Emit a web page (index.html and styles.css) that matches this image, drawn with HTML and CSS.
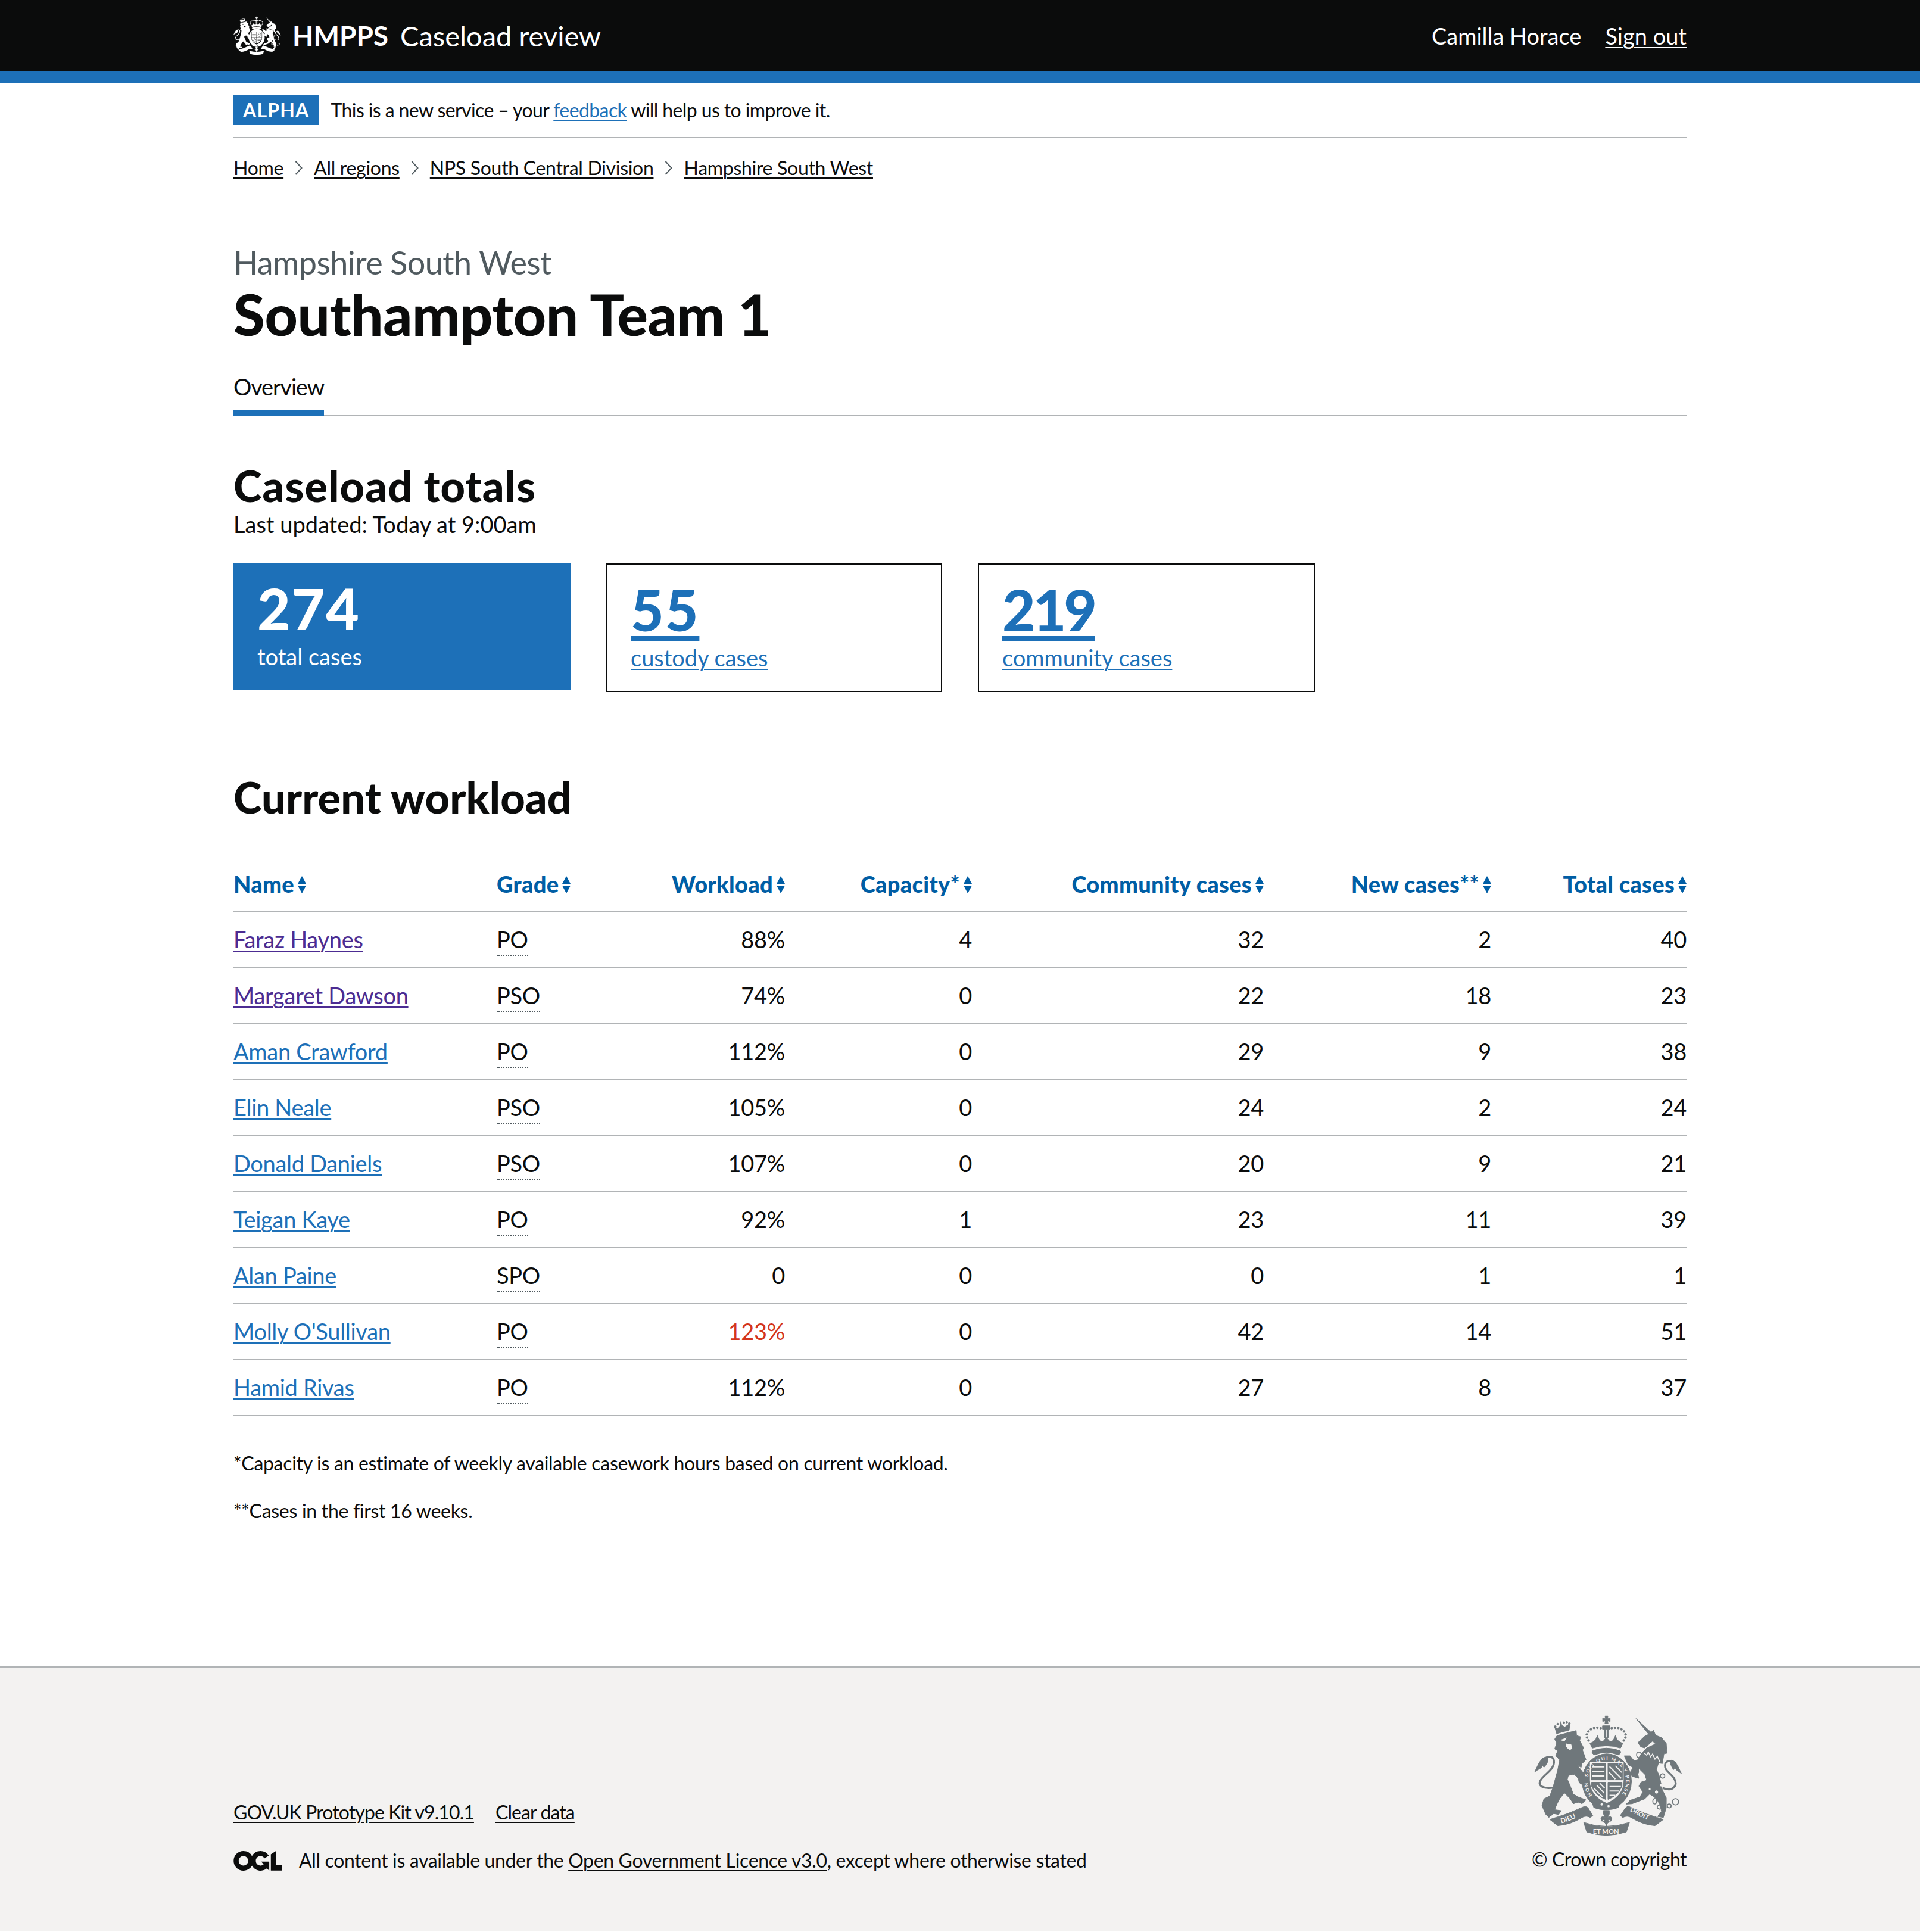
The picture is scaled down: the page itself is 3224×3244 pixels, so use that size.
FILE: index.html
```html
<!DOCTYPE html>
<html lang="en">
<head>
<meta charset="utf-8">
<title>Caseload review</title>
<link rel="stylesheet" href="styles.css">
</head>
<body>
<svg class="defs" aria-hidden="true">
  <symbol id="crest" viewBox="225 115 760 620">
    <!-- lion crown -->
    <g class="cf">
      <path d="M340 212 L330 178 L345 186 L358 172 L362 150 L366 170 L382 178 L408 160 L404 194 Z"/>
      <circle cx="333" cy="176" r="5"/><circle cx="345" cy="163" r="4.5"/><circle cx="377" cy="156" r="4.5"/><circle cx="392" cy="154" r="4.5"/><circle cx="405" cy="160" r="5"/>
    </g>
    <!-- lion -->
    <path class="cf" d="M330 240 L342 222 L440 196 L442 222 L462 228 L458 248 L478 285 L472 295 L490 345 L470 365 L465 385 L445 372 L490 430 L505 470 L490 468 L480 462 L470 472 L455 462 L450 440 L430 420 L400 425 L395 445 L410 480 L425 520 L450 535 L490 550 L470 570 L450 562 L425 570 L410 545 L380 515 L355 545 L340 575 L330 600 L365 605 L350 625 L325 620 L300 640 L285 625 L265 580 L275 545 L305 530 L320 490 L345 400 L355 345 L335 325 L345 300 L330 290 L340 260 Z"/>
    <path class="cb" d="M358 245 L392 232 L380 252 Z M388 262 L415 268 L420 288 L408 296 L398 290 L386 276 Z"/>
    <path class="cs" d="M322 488 C275 495 240 480 258 450 C275 420 332 395 326 350 C322 325 295 325 282 340"/>
    <path class="cf" d="M290 330 C262 332 250 360 228 408 C248 392 262 392 272 372 C272 388 276 388 288 368 C298 352 300 340 290 330 Z"/>
    <!-- royal crown -->
    <g class="cf">
      <path d="M587 122 H602 L600 136 L613 133 V150 L600 147 L603 162 H586 L589 147 L575 150 V133 L589 136 Z"/>
      <rect x="574" y="172" width="38" height="17"/>
      <rect x="584" y="190" width="7" height="42"/><rect x="597" y="190" width="7" height="42"/>
      <circle cx="565" cy="184" r="5"/><circle cx="548" cy="182" r="5"/><circle cx="531" cy="183" r="5"/><circle cx="515" cy="190" r="5"/><circle cx="502" cy="201" r="5"/><circle cx="494" cy="216" r="5"/><circle cx="495" cy="232" r="5"/><circle cx="503" cy="247" r="5"/>
      <circle cx="621" cy="184" r="5"/><circle cx="638" cy="182" r="5"/><circle cx="655" cy="183" r="5"/><circle cx="671" cy="190" r="5"/><circle cx="684" cy="201" r="5"/><circle cx="692" cy="216" r="5"/><circle cx="691" cy="232" r="5"/><circle cx="683" cy="247" r="5"/>
      <path d="M510 262 L530 252 L540 240 L548 222 L556 240 L566 252 L578 250 L594 232 L610 250 L622 252 L632 240 L640 222 L648 240 L658 252 L678 262 L666 286 Q594 262 522 286 Z"/>
      <path d="M522 300 Q594 272 665 300 Q672 310 656 320 Q594 298 532 320 Q516 310 522 300 Z"/>
    </g>
    <!-- garter and shield -->
    <ellipse class="cf" cx="596" cy="455" rx="126" ry="140"/>
    <path class="cb" d="M510 358 H682 V450 Q682 530 596 566 Q510 530 510 450 Z"/>
    <path class="cf" d="M516 364 H590 V448 H516 Z M602 364 H676 V448 H602 Z M518 460 H590 V548 Q540 530 518 480 Z M602 460 H674 V480 Q652 530 602 548 Z"/>
    <g class="cb2">
      <path d="M522 382 H584 M522 405 H584 M522 428 H584 M610 380 L670 440 M640 376 L672 410 M606 408 L640 444 M530 490 L575 535 M545 475 L582 515 M560 465 L585 490 M610 482 H668 M610 505 H660 M610 527 H640"/>
    </g>
    <path class="cf" d="M520 560 Q590 600 668 555 L655 590 Q590 612 530 590 Z"/>
    <circle class="cbf" cx="570" cy="573" r="6"/><circle class="cbf" cx="605" cy="582" r="6"/>
    <!-- unicorn -->
    <path class="cf" d="M745 135 L822 205 L835 195 L845 220 L875 232 L900 262 L903 312 L888 315 L880 365 L860 362 L850 395 L865 430 L880 500 L890 520 L900 540 L900 590 L885 640 L855 635 L875 610 L870 580 L850 545 L815 520 L790 545 L725 570 L695 572 L715 552 L765 535 L780 510 L760 480 L770 460 L800 450 L790 420 L760 390 L755 420 L760 440 L725 430 L715 410 L730 385 L705 370 L700 360 L685 325 L715 325 L735 350 L755 345 L765 325 L785 300 L800 285 L845 265 L830 250 L790 285 L770 280 L755 258 L790 225 L810 215 Z"/>
    <path class="cwh" d="M785 310 L800 322 L808 306 L820 330 L830 316 L842 342 L854 328 L868 358"/>
    <circle class="cbf" cx="875" cy="475" r="7"/><circle class="cbf" cx="850" cy="510" r="8"/><circle class="cbf" cx="815" cy="495" r="5"/>
    <path class="cs" d="M885 490 C930 510 962 480 940 440 C920 410 885 400 895 365 C905 345 930 350 945 362"/>
    <path class="cf" d="M925 347 C950 350 960 380 978 418 C962 402 950 402 942 384 C942 400 936 398 928 382 C920 366 918 354 925 347 Z"/>
    <g class="cr">
      <ellipse cx="760" cy="320" rx="12" ry="14"/><ellipse cx="746" cy="405" rx="12" ry="14"/><circle cx="881" cy="428" r="11"/><ellipse cx="841" cy="557" rx="10" ry="14"/><ellipse cx="866" cy="587" rx="12" ry="10"/><circle cx="915" cy="581" r="10"/><circle cx="947" cy="560" r="16"/>
    </g>
    <!-- motto ribbons -->
    <path class="cf" d="M305 650 Q395 625 485 582 L500 590 L525 630 L512 640 Q490 628 470 640 Q410 678 345 682 Z"/>
    <path class="cf" d="M885 650 Q795 625 705 582 L692 590 L665 630 L678 640 Q700 628 720 640 Q780 678 842 682 Z"/>
    <path class="cf" d="M478 665 Q590 705 712 665 L696 714 Q590 748 494 714 Z"/>
    <!-- fleur -->
    <rect class="cf" x="579" y="604" width="30" height="20"/>
    <path class="cf" d="M594 608 C610 628 604 636 598 644 C612 626 632 640 616 660 C612 650 606 650 602 654 L610 662 L600 668 L594 684 L588 668 L578 662 L586 654 C582 650 576 650 572 660 C556 640 576 626 590 644 C584 636 578 628 594 608 Z"/>
  </symbol>
  <symbol id="sort" viewBox="0 0 14 29">
    <path d="M7 0 L14 13 H0 Z M0 16 H14 L7 29 Z"/>
  </symbol>
  <symbol id="chev" viewBox="0 0 13 24">
    <path d="M1.5 1 L11.5 12 L1.5 23"/>
  </symbol>
</svg>

<header class="site-header">
  <div class="wrap header-inner">
    <div class="brand">
      <svg class="brand-crest"><use href="#crest"/></svg>
      <span class="brand-org">HMPPS</span>
      <span class="brand-service">Caseload review</span>
    </div>
    <div class="user">
      <span>Camilla Horace</span>
      <a href="#">Sign out</a>
    </div>
  </div>
</header>

<div class="wrap">
  <div class="phase">
    <strong class="tag">ALPHA</strong>
    <span>This is a new service – your <a class="link" href="#">feedback</a> will help us to improve it.</span>
  </div>
  <nav class="crumbs">
    <a href="#">Home</a><svg class="chev"><use href="#chev"/></svg>
    <a href="#">All regions</a><svg class="chev"><use href="#chev"/></svg>
    <a href="#">NPS South Central Division</a><svg class="chev"><use href="#chev"/></svg>
    <a href="#">Hampshire South West</a>
  </nav>

  <main class="main">
    <p class="caption">Hampshire South West</p>
    <h1 class="title">Southampton Team 1</h1>
    <div class="tabs"><span class="tab">Overview</span></div>

    <h2 class="h-totals">Caseload totals</h2>
    <p class="updated">Last updated: Today at 9:00am</p>

    <div class="cards">
      <div class="card card-solid">
        <div class="card-num">274</div>
        <div class="card-label">total cases</div>
      </div>
      <div class="card card-line">
        <a class="card-num card-link-num" href="#">55</a>
        <a class="card-label card-link" href="#">custody cases</a>
      </div>
      <div class="card card-line">
        <a class="card-num card-link-num card-num-tight" href="#">219</a>
        <a class="card-label card-link" href="#">community cases</a>
      </div>
    </div>

    <h2 class="h-workload">Current workload</h2>

    <table class="workload">
      <colgroup>
        <col class="c1"><col class="c2"><col class="c3"><col class="c4"><col class="c5"><col class="c6"><col class="c7">
      </colgroup>
      <thead>
        <tr>
          <th>Name<svg class="sort"><use href="#sort"/></svg></th>
          <th>Grade<svg class="sort"><use href="#sort"/></svg></th>
          <th class="num">Workload<svg class="sort"><use href="#sort"/></svg></th>
          <th class="num">Capacity*<svg class="sort"><use href="#sort"/></svg></th>
          <th class="num">Community cases<svg class="sort"><use href="#sort"/></svg></th>
          <th class="num">New cases**<svg class="sort"><use href="#sort"/></svg></th>
          <th class="num">Total cases<svg class="sort"><use href="#sort"/></svg></th>
        </tr>
      </thead>
      <tbody>
        <tr><td><a class="link visited" href="#">Faraz Haynes</a></td><td><abbr class="grade">PO</abbr></td><td class="num">88%</td><td class="num">4</td><td class="num">32</td><td class="num">2</td><td class="num">40</td></tr>
        <tr><td><a class="link visited" href="#">Margaret Dawson</a></td><td><abbr class="grade">PSO</abbr></td><td class="num">74%</td><td class="num">0</td><td class="num">22</td><td class="num">18</td><td class="num">23</td></tr>
        <tr><td><a class="link" href="#">Aman Crawford</a></td><td><abbr class="grade">PO</abbr></td><td class="num">112%</td><td class="num">0</td><td class="num">29</td><td class="num">9</td><td class="num">38</td></tr>
        <tr><td><a class="link" href="#">Elin Neale</a></td><td><abbr class="grade">PSO</abbr></td><td class="num">105%</td><td class="num">0</td><td class="num">24</td><td class="num">2</td><td class="num">24</td></tr>
        <tr><td><a class="link" href="#">Donald Daniels</a></td><td><abbr class="grade">PSO</abbr></td><td class="num">107%</td><td class="num">0</td><td class="num">20</td><td class="num">9</td><td class="num">21</td></tr>
        <tr><td><a class="link" href="#">Teigan Kaye</a></td><td><abbr class="grade">PO</abbr></td><td class="num">92%</td><td class="num">1</td><td class="num">23</td><td class="num">11</td><td class="num">39</td></tr>
        <tr><td><a class="link" href="#">Alan Paine</a></td><td><abbr class="grade">SPO</abbr></td><td class="num">0</td><td class="num">0</td><td class="num">0</td><td class="num">1</td><td class="num">1</td></tr>
        <tr><td><a class="link" href="#">Molly O'Sullivan</a></td><td><abbr class="grade">PO</abbr></td><td class="num over">123%</td><td class="num">0</td><td class="num">42</td><td class="num">14</td><td class="num">51</td></tr>
        <tr><td><a class="link" href="#">Hamid Rivas</a></td><td><abbr class="grade">PO</abbr></td><td class="num">112%</td><td class="num">0</td><td class="num">27</td><td class="num">8</td><td class="num">37</td></tr>
      </tbody>
    </table>

    <p class="note note-first">*Capacity is an estimate of weekly available casework hours based on current workload.</p>
    <p class="note">**Cases in the first 16 weeks.</p>
  </main>
</div>

<footer class="site-footer">
  <div class="wrap footer-inner">
    <div class="meta">
      <div class="meta-links">
        <a href="#">GOV.UK Prototype Kit v9.10.1</a>
        <a href="#">Clear data</a>
      </div>
      <div class="licence">
        <svg class="ogl" viewBox="0 0 483.2 195.7"><path fill="currentColor" d="M421.5 142.8V.1l-50.7 32.3v161.1h112.4v-50.7zm-122.3-9.6A47.12 47.12 0 0 1 221 97.8c0-26 21.1-47.1 47.1-47.1 16.7 0 31.4 8.7 39.7 21.8l42.7-27.2A97.63 97.63 0 0 0 268.1 0c-36.5 0-68.3 20.1-85.1 49.7A98 98 0 0 0 97.8 0C43.9 0 0 43.9 0 97.8s43.9 97.8 97.8 97.8c36.5 0 68.3-20.1 85.1-49.7a97.76 97.76 0 0 0 149.6 25.4l19.4 22.2h3v-87.8h-80l24.3 27.5zM97.8 145c-26 0-47.1-21.1-47.1-47.1s21.1-47.1 47.1-47.1 47.2 21 47.2 47S123.8 145 97.8 145"/></svg>
        <span>All content is available under the <a href="#">Open Government Licence v3.0</a>, except where otherwise stated</span>
      </div>
    </div>
    <div class="copyright">
      <svg class="footer-crest" viewBox="225 115 760 620">
        <use href="#crest" x="225" y="115" width="760" height="620"/>
        <path id="garterpath" class="cn" d="M524 528 A98 108 0 1 1 668 528"/>
        <path id="ribbonl" class="cn" d="M362 670 Q420 656 476 620"/>
        <path id="ribbonr" class="cn" d="M712 606 Q770 640 836 668"/>
        <text class="ct"><textPath href="#garterpath" textLength="470" lengthAdjust="spacing" startOffset="2">HONI SOIT QUI MAL Y PENSE</textPath></text>
        <text class="ct ctm"><textPath href="#ribbonl" startOffset="2">DIEU</textPath></text>
        <text class="ct ctm"><textPath href="#ribbonr" startOffset="0">DROIT</textPath></text>
        <text class="ct ctm" x="592" y="722" text-anchor="middle">ET MON</text>
      </svg>
      <span>© Crown copyright</span>
    </div>
  </div>
</footer>
</body>
</html>
```
FILE: styles.css
```css
* { box-sizing: border-box; }
html, body { margin: 0; padding: 0; }
body {
  font-family: Lato, "Noto Sans", Arial, sans-serif;
  font-size: 38px;
  line-height: 50px;
  color: #0b0c0c;
  background: #fff;
}
p, h1, h2 { margin: 0; }
a { color: inherit; text-decoration-thickness: 2px; text-underline-offset: 4px; }
.defs { position: absolute; width: 0; height: 0; overflow: hidden; }
.wrap { width: 2440px; margin: 0 auto; }

/* crest parts */
.cf { fill: var(--crest); stroke: var(--crest); stroke-width: 3; stroke-linejoin: round; }
.cb { fill: var(--crest-bg); }
.cbf { fill: var(--crest-bg); }
.cb2 { fill: none; stroke: var(--crest-bg); stroke-width: 6; }
.cs { fill: none; stroke: var(--crest); stroke-width: 10; stroke-linecap: round; }
.cwh { fill: none; stroke: var(--crest-bg); stroke-width: 5; }
.cr { fill: none; stroke: var(--crest); stroke-width: 5; }
.cn { fill: none; stroke: none; }
.ct { fill: var(--crest-bg); font-family: Lato, sans-serif; font-weight: 700; font-size: 25px; }
.ctm { font-size: 34px; }

/* header */
.site-header { background: #0b0c0c; border-bottom: 20px solid #1d70b8; height: 140px; color: #fff; }
.header-inner { height: 120px; display: flex; justify-content: space-between; align-items: center; }
.brand { display: flex; align-items: center; }
.brand-crest { width: 80px; height: 68px; margin-right: 19px; --crest: #fff; --crest-bg: #0b0c0c; }
.brand-org { font-weight: 700; font-size: 46px; margin-right: 20px; }
.brand-service { font-size: 47px; }
.user { display: flex; gap: 40px; }

/* phase banner */
.phase { display: flex; align-items: center; gap: 20px; padding: 20px 0; border-bottom: 2px solid #b1b4b6; font-size: 32px; height: 92px; letter-spacing: -0.6px; }
.tag { background: #1d70b8; color: #fff; height: 50px; line-height: 50px; padding: 0 16px; letter-spacing: 1.2px; font-weight: 700; }
.link { color: #1d70b8; }
.link.visited { color: #4c2c92; }

/* breadcrumbs */
.crumbs { display: flex; align-items: center; gap: 19px; padding-top: 30px; font-size: 32px; line-height: 40px; letter-spacing: -0.3px; }
.chev { width: 13px; height: 24px; fill: none; stroke: #505a5f; stroke-width: 2; }

/* headings */
.caption { margin-top: 109px; font-size: 54px; line-height: 60px; color: #505a5f; letter-spacing: -0.6px; }
.title { margin-top: 6px; font-size: 96px; line-height: 100px; font-weight: 900; letter-spacing: -0.4px; }
.tabs { margin-top: 47px; display: flex; border-bottom: 2px solid #b1b4b6; }
.tab { margin-bottom: -2px; padding-bottom: 14px; border-bottom: 10px solid #1d70b8; letter-spacing: -1.2px; }
.h-totals { margin-top: 78px; font-size: 72px; line-height: 79px; font-weight: 900; letter-spacing: 1.1px; }

/* cards */
.cards { margin-top: 41px; display: grid; grid-template-columns: 566px 564px 566px; gap: 60px; align-items: start; }
.card-num { display: block; font-size: 96px; line-height: 100px; font-weight: 900; letter-spacing: 2px; }
.card-num-tight { letter-spacing: -4px; }
.card-label { display: block; }
.card-solid { background: #1d70b8; color: #fff; padding: 25px 40px 31px; }
.card-solid .card-label { margin-top: 6px; }
.card-line { border: 2px solid #0b0c0c; padding: 25px 39px 31px; }
.card-line a { color: #1d70b8; width: fit-content; }
.card-link-num { text-decoration-thickness: 8px; text-underline-offset: 8px; }
.card-link { margin-top: 6px; }

/* table */
.h-workload { margin-top: 137px; font-size: 72px; line-height: 79px; font-weight: 900; letter-spacing: 0.1px; }
.workload { margin-top: 60px; width: 2440px; table-layout: fixed; border-collapse: separate; border-spacing: 0; }
.c1 { width: 442px; }
.c2 { width: 200px; }
.c3 { width: 324px; }
.c4 { width: 314px; }
.c5 { width: 490px; }
.c6 { width: 382px; }
.c7 { width: 288px; }
.workload th, .workload td { height: 94px; padding: 0 40px 0 0; border-bottom: 2px solid #b1b4b6; text-align: left; vertical-align: middle; font-weight: 400; white-space: nowrap; }
.workload td { letter-spacing: -0.3px; padding-bottom: 3px; }
.workload th:last-child, .workload td:last-child { padding-right: 0; }
.workload th { color: #005ea5; font-weight: 900; letter-spacing: 0.3px; }
.workload .num { text-align: right; }
.sort { width: 14px; height: 29px; margin-left: 6px; vertical-align: -1px; fill: currentColor; }
.grade { border-bottom: 2px dotted #505a5f; padding-bottom: 4px; text-decoration: none; }
.over { color: #d4351c; }

.note { font-size: 32px; line-height: 40px; margin-top: 40px; letter-spacing: -0.3px; }
.note-first { margin-top: 59px; }
.main { padding-bottom: 241px; }

/* footer */
.site-footer { background: #f3f2f1; border-top: 2px solid #b1b4b6; font-size: 32px; line-height: 40px; padding: 79px 0 101px; }
.footer-inner { display: flex; justify-content: space-between; align-items: flex-end; }
.meta-links { display: flex; gap: 36px; margin-bottom: 41px; letter-spacing: -0.9px; }
.licence { display: flex; align-items: center; gap: 28px; letter-spacing: -0.35px; margin-bottom: -2px; }
.ogl { width: 82px; height: 33px; }
.copyright { display: flex; flex-direction: column; align-items: flex-end; letter-spacing: -0.5px; }
.footer-crest { width: 250px; height: 204px; margin: 0 6px 19px 0; --crest: #6f777b; --crest-bg: #f3f2f1; letter-spacing: 0; }
```
